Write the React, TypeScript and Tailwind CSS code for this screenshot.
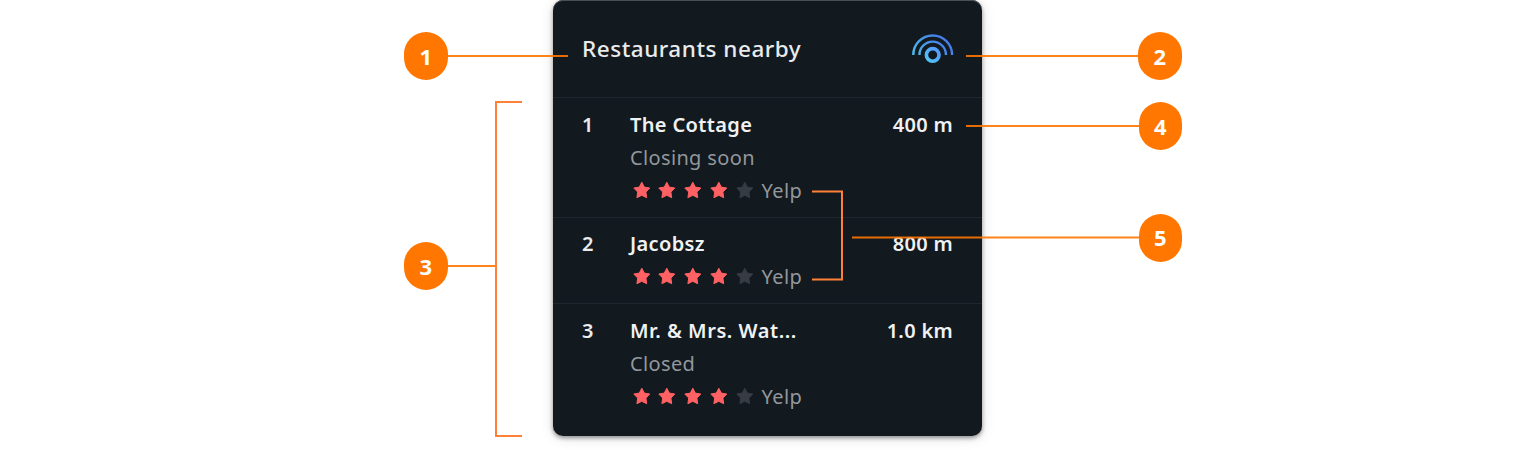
type Restaurant = {
  name: string;
  distance: string;
  status?: string;
  rowClass: string;
  nameClass: string;
};

const restaurants: Restaurant[] = [
  { name: "The Cottage", distance: "400 m", status: "Closing soon", rowClass: "h-[120px] pt-[10px]", nameClass: "tracking-[0.36px]" },
  { name: "Jacobsz", distance: "800 m", rowClass: "h-[86px] pt-[9px]", nameClass: "tracking-[0.36px]" },
  { name: "Mr. & Mrs. Wat...", distance: "1.0 km", status: "Closed", rowClass: "h-[133px] pt-[10px]", nameClass: "tracking-[0.54px]" },
];

const callouts = [
  { label: "1", position: "left-[404px] top-[32px]" },
  { label: "3", position: "left-[404px] top-[242px]" },
  { label: "2", position: "left-[1138px] top-[32px]" },
  { label: "4", position: "left-[1138.5px] top-[102px]" },
  { label: "5", position: "left-[1138.5px] top-[213.5px]" },
];

function NearbyIcon() {
  return (
    <svg width="44" height="32" viewBox="0 0 44 32" fill="none">
      <defs>
        <linearGradient id="signal" x1="2" y1="26" x2="26" y2="2" gradientUnits="userSpaceOnUse">
          <stop stopColor="#4fc3ee" />
          <stop offset="1" stopColor="#447de8" />
        </linearGradient>
        <linearGradient id="beacon" x1="15" y1="29" x2="28" y2="15" gradientUnits="userSpaceOnUse">
          <stop stopColor="#4fc8f4" />
          <stop offset="1" stopColor="#5596ff" />
        </linearGradient>
      </defs>
      <path d="M2.3 21.9a19.4 19.4 0 0 1 38.8 0" stroke="url(#signal)" strokeWidth="2.4" />
      <path d="M8.4 21.9a13.3 13.3 0 0 1 26.6 0" stroke="url(#signal)" strokeWidth="2.4" />
      <circle cx="21.7" cy="21.9" r="6.3" stroke="url(#beacon)" strokeWidth="3.6" />
    </svg>
  );
}

function Star({ filled }: { filled: boolean }) {
  return (
    <svg width="18" height="18" viewBox="0 0 18 18" className={filled ? "text-[#ff6164]" : "text-[#363b44]"}>
      <path
        d="M8.8 1.2l2.5 4.9 5.5.9-3.9 4 .8 5.7L8.8 14.3l-4.9 2.4.8-5.7-3.9-4 5.5-.9z"
        fill="currentColor"
        stroke="currentColor"
        strokeWidth="1"
        strokeLinejoin="round"
      />
    </svg>
  );
}

function Row({ item, index }: { item: Restaurant; index: number }) {
  return (
    <li className={`flex shrink-0 border-t border-[#20262d] px-[29px] text-[20px] leading-[33px] whitespace-nowrap ${item.rowClass}`}>
      <span className="w-[48px] font-semibold text-[#e9ebec]">{index + 1}</span>
      <div className="flex-1">
        <div className={`font-semibold text-[#f0f1f2] ${item.nameClass}`}>{item.name}</div>
        {item.status && <div className="tracking-[0.35px] text-[#92979b]">{item.status}</div>}
        <div className="flex h-[32px] items-center">
          <div className="ml-[2.5px] flex gap-[7.75px]">
            {[0, 1, 2, 3, 4].map((n) => (
              <Star key={n} filled={n < 4} />
            ))}
          </div>
          <span className="ml-[8px] tracking-[0.4px] text-[#92979b]">Yelp</span>
        </div>
      </div>
      <span className="font-semibold tracking-[0.3px] text-[#f0f1f2]">{item.distance}</span>
    </li>
  );
}

export default function App() {
  return (
    <main className="relative flex h-[450px] justify-center overflow-hidden bg-white pr-px font-['Noto_Sans',sans-serif]">
      <section className="flex h-[436px] w-[429px] flex-col overflow-hidden rounded-[10px] bg-[#12191f] shadow-[0_2px_4px_rgba(0,0,0,0.4),0_2px_14px_rgba(0,0,0,0.12),inset_0_1px_0_#4b5054]">
        <header className="flex h-[97px] shrink-0 items-center justify-between pr-[27px] pl-[29px]">
          <h1 className="pt-px text-[22.5px] font-medium tracking-[0.52px] whitespace-nowrap text-[#e9ebec]">Restaurants nearby</h1>
          <NearbyIcon />
        </header>
        <ol className="flex flex-col">
          {restaurants.map((item, index) => (
            <Row key={item.name} item={item} index={index} />
          ))}
        </ol>
      </section>

      <svg className="absolute top-0 left-0" width="1536" height="450" fill="none" strokeWidth="2">
        <g stroke="#ff7700" strokeOpacity="0.9">
          <path d="M447 56H568M447 266H496" />
          <path d="M966 56H1139M966 126H1139M852 237.5H1139" />
        </g>
        <g stroke="#ff8138">
          <path d="M522 102H496V436H522" />
          <path d="M812 191.5H842V279.5H812" />
        </g>
      </svg>
      {callouts.map(({ label, position }) => (
        <span
          key={label}
          className={`absolute flex h-[48px] w-[43.5px] items-center justify-center rounded-[22px] bg-[#ff7700] font-['Open_Sans',sans-serif] text-[22px] font-bold text-white ${position}`}
        >
          {label}
        </span>
      ))}
    </main>
  );
}
